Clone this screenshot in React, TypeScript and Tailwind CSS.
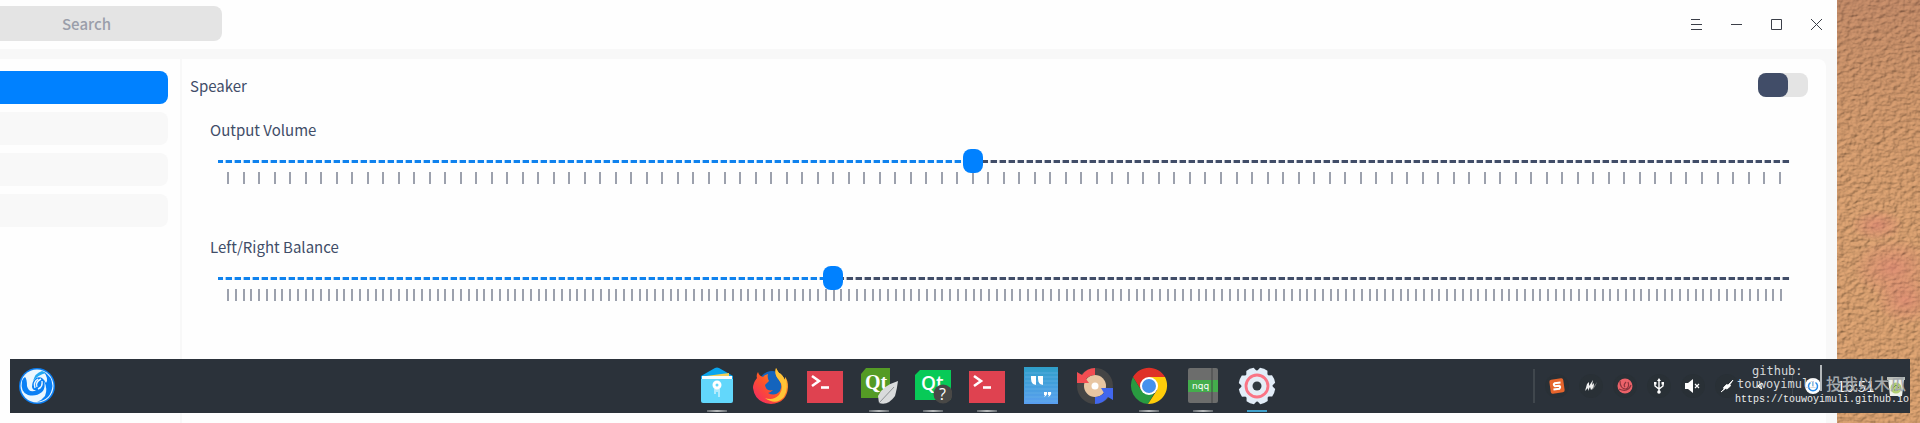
import React from "react";

function TickSlider({ id, label, value, max }: { id: string; label: string; value: number; max: number }) {
  const [current, setCurrent] = React.useState(value);
  const percent = (current / max) * 100;
  return (
    <section className="h-[117px] px-7">
      <label htmlFor={id} className="block h-6 leading-6">
        {label}
      </label>
      <div className="relative mx-2 mt-[7px] h-6 pt-[11px]">
        <div className="h-[3px] bg-[repeating-linear-gradient(90deg,#414d68_0px,#414d68_5px,#f4f5f7_5px,#f4f5f7_7px,#a9aebb_7px,#a9aebb_8px,#414d68_8px,#414d68_9px)]">
          <div
            className="h-[3px] bg-[repeating-linear-gradient(90deg,#0f82ee_0px,#0f82ee_5px,#f3f9fe_5px,#f3f9fe_7px,#9fcdf8_7px,#9fcdf8_8px,#0f82ee_8px,#0f82ee_9px)]"
            style={{ width: percent + "%" }}
          />
        </div>
        <input
          id={id}
          type="range"
          min={0}
          max={max}
          value={current}
          onChange={(e) => setCurrent(Number(e.target.value))}
          className="absolute inset-0 m-0 h-6 w-full cursor-pointer appearance-none bg-transparent [&::-webkit-slider-thumb]:h-6 [&::-webkit-slider-thumb]:w-5 [&::-webkit-slider-thumb]:appearance-none [&::-webkit-slider-thumb]:rounded-lg [&::-webkit-slider-thumb]:bg-[#0081ff]"
        />
      </div>
      <div className="-mt-px ml-[17px] mr-[19px] flex h-3">
        {Array.from({ length: max + 1 }, (_, i) => (
          <i key={i} className="h-3 w-0 grow last:grow-0">
            <i className="block h-3 w-[2px] bg-[#9ca1ad]" />
          </i>
        ))}
      </div>
    </section>
  );
}

function Launcher() {
  return (
    <svg viewBox="0 0 38 38" className="size-[38px]">
      <circle cx="19" cy="19" r="18" fill="#0b7df0" />
      <circle cx="19" cy="19" r="16.500" fill="#eaf7ff" />
      <path d="M4 14Q2 25 10 28Q18 30 24 25Q28 21 26 14Q30 22 27 29Q24 33 19 35Q33 33 34.500 19Q34 9 26 5Q31 12 28 16Q24 8 18 11Q14 14 14 20Q15 24 19 23Q11 27 9 19Q9 12 7 10Q5 11 4 14Z" fill="#0a80f5" />
      <path d="M9 7Q16 2 25 4.500Q18 6 15 14Q14 11 9 7Z" fill="#eaf7ff" />
      <path d="M15 14Q17 6 24 4Q27 5 28 6Q20 8 15 14Z" fill="#22a8f2" />
      <path d="M19 20Q17 15 23 12M20 22Q25 20 24 14M17 21Q15 15 20 12" fill="none" stroke="#eaf7ff" strokeWidth="1.400" />
    </svg>
  );
}

function Files() {
  return (
    <svg viewBox="0 0 38 38" className="size-[38px]">
      <path d="M3 9L17 1Q19 0 21 1L35 9V14H3Z" fill="#0aa5ee" />
      <path d="M8 9L31 6V14H8Z" fill="#f3cf57" />
      <path d="M4 9H34V16H4Z" fill="#f7fdff" />
      <path d="M3 12H35V34Q35 36 33 36H5Q3 36 3 34Z" fill="#62d7fb" />
      <circle cx="19" cy="18" r="3" fill="none" stroke="#fff" strokeWidth="3" />
      <path d="M17 22V27M19 22V25M21 22V30" stroke="#fff" />
    </svg>
  );
}

function Firefox() {
  return (
    <svg viewBox="0 0 38 38" className="size-[38px]">
      <defs>
        <linearGradient id="fx" x1="0" y1="1" x2="1" y2="0">
          <stop offset="0" stopColor="#f2206c" />
          <stop offset=".5" stopColor="#ff5a25" />
          <stop offset="1" stopColor="#ffd530" />
        </linearGradient>
      </defs>
      <circle cx="20" cy="17" r="13" fill="#1464bd" />
      <path d="M24 1Q22 8 27 13Q31 18 28 24Q23 30 16 26Q18 26 21 23Q14 25 13 18Q16 15 17 14Q15 11 16 7Q12 8 11 10Q7 9 6 5Q4 8 5 11Q1 16 1 21Q3 36 19 37Q35 36 36 20Q36 13 33 10V13Q30 7 27 6Q25 4 24 1Z" fill="url(#fx)" />
      <path d="M24 1Q22 8 27 13Q33 20 27 28Q21 34 13 31Q24 39 32 30Q37 21 33 10V13Q30 7 27 6Z" fill="#ffc436" />
    </svg>
  );
}

function Terminal() {
  return (
    <svg viewBox="0 0 38 38" className="size-[38px]">
      <path d="M1 4H37V36H1Z" fill="#df4250" />
      <path d="M6 9L13 14L6 19" fill="none" stroke="#fff" strokeWidth="2.600" />
      <path d="M15 20.500H23" stroke="#fff" strokeWidth="2.600" />
    </svg>
  );
}

function QtCreator() {
  return (
    <svg viewBox="0 0 38 38" className="size-[38px]">
      <path d="M1 7L6 1H30V31H1Z" fill="#549b25" />
      <text x="5" y="22" fontFamily="Liberation Serif, serif" fontWeight="700" fontSize="20" fill="#fff">Qt</text>
      <path d="M38 14Q22 19 18 29L19 36Q28 39 35 29Q37 22 38 14Z" fill="#d9dbdc" />
      <path d="M34 20L19 36" stroke="#8d9194" />
    </svg>
  );
}

function QtAssistant() {
  return (
    <svg viewBox="0 0 38 38" className="size-[38px]">
      <path d="M1 8L6 3H37V33H1Z" fill="#08ca57" />
      <text x="7" y="23" fontFamily="Open Sans, sans-serif" fontWeight="600" fontSize="19" fill="#fff">Qt</text>
      <circle cx="29" cy="27" r="9.500" fill="#494846" />
      <text x="25" y="33" fontFamily="Open Sans, sans-serif" fontSize="16" fill="#fff">?</text>
    </svg>
  );
}

function Notes() {
  return (
    <svg viewBox="0 0 38 38" className="size-[38px]">
      <defs>
        <linearGradient id="notes" x1="0" y1="0" x2="0" y2="1">
          <stop offset="0" stopColor="#2f9fc9" />
          <stop offset="1" stopColor="#5a9ff0" />
        </linearGradient>
      </defs>
      <path d="M2 0H36V37H2Z" fill="url(#notes)" />
      <path d="M3 6H36M3 10H36M3 14H36M3 18H36M3 22H36M3 26H36M3 30H36M3 34H36" stroke="#6ab6e8" strokeWidth=".6" />
      <path d="M9 9H14V18L11 17Q9 15 9 12ZM16 9H21V18L18 17Q16 15 16 12ZM22 25H25Q26 28 22 30L23 28H22ZM26 25H29Q30 28 26 30L27 28H26Z" fill="#fff" />
    </svg>
  );
}

function DiskSync() {
  return (
    <svg viewBox="0 0 38 38" className="size-[38px]">
      <circle cx="19" cy="19" r="18" fill="#454545" />
      <circle cx="19" cy="19" r="11" fill="#e8c6a2" />
      <path d="M19 1Q11 1 6 8L1 5V16H13L10 12Q14 8 19 8Z" fill="#f24d52" />
      <path d="M19 37Q27 37 32 30L37 33V21H25L28 26Q24 30 19 30Z" fill="#4167ee" />
      <circle cx="19" cy="19" r="3.500" fill="#fff" />
    </svg>
  );
}

function Chrome() {
  return (
    <svg viewBox="0 0 38 38" className="size-[38px]">
      <path d="M3 10A18.500 18.500 0 0 1 35 10H19L11 23Z" fill="#df3027" />
      <path d="M3 10A18.500 18.500 0 0 0 18 37L26 23L19 26L11 23Z" fill="#299b40" />
      <path d="M35 10H19L27 23L18 37A18.500 18.500 0 0 0 35 10Z" fill="#ffcd0a" />
      <circle cx="19" cy="19" r="9" fill="#fff" />
      <circle cx="19" cy="19" r="7" fill="#4591ed" />
    </svg>
  );
}

function Notepad() {
  return (
    <svg viewBox="0 0 38 38" className="size-[38px]">
      <rect x="4" y="1" width="30" height="35" rx="2" fill="#6c6d6c" />
      <path d="M4 13H34V25H4Z" fill="#44ad4c" />
      <path d="M28 1V36" stroke="#454746" />
      <text x="8" y="22" fontFamily="DejaVu Sans, sans-serif" fontSize="9" fill="#fff">nqq</text>
    </svg>
  );
}

function Gear() {
  return (
    <svg viewBox="0 0 38 38" className="size-[38px]">
      <g fill="#e2edf8">
        <circle cx="19" cy="19" r="15.500" />
        {[0, 45, 90, 135, 180, 225, 270, 315].map((a) => (
          <path key={a} d="M13 6L15 1Q19 0 23 1L25 6Z" transform={"rotate(" + (a + 22) + " 19 19)"} />
        ))}
      </g>
      <circle cx="19" cy="19" r="11" fill="#e5edf6" stroke="#fa7485" strokeWidth="2.800" />
      <circle cx="19" cy="19" r="4.500" fill="#303940" />
    </svg>
  );
}

const dockItems = [
  { name: "Files", icon: <Files />, mark: "gray" },
  { name: "Firefox", icon: <Firefox />, mark: "" },
  { name: "Terminal", icon: <Terminal />, mark: "" },
  { name: "Qt Creator", icon: <QtCreator />, mark: "gray" },
  { name: "Qt Assistant", icon: <QtAssistant />, mark: "gray" },
  { name: "Terminal window", icon: <Terminal />, mark: "gray" },
  { name: "Notes", icon: <Notes />, mark: "" },
  { name: "Disk sync", icon: <DiskSync />, mark: "" },
  { name: "Chrome", icon: <Chrome />, mark: "gray" },
  { name: "Notepad", icon: <Notepad />, mark: "gray" },
  { name: "Settings", icon: <Gear />, mark: "blue" },
];

const trayItems = [
  {
    name: "Input method",
    icon: (
      <g transform="rotate(-8 8 8)">
        <rect x="1" y="1" width="14" height="14" rx="2" fill="#e6642c" />
        <path d="M12 5H6Q4 6 6 8H10Q12 9 10 11H4" fill="none" stroke="#fff" strokeWidth="2" />
      </g>
    ),
  },
  {
    name: "Monitor",
    icon: (
      <g>
        <path d="M9 12Q12 10 14 4L11 8L10 6Z" fill="#777b7e" />
        <path d="M2 13L4 6L6 4V8L10 2L9 7L11 5Q11 10 8 12L7 9L5 13V10Z" fill="#f0f0f0" />
      </g>
    ),
  },
  {
    name: "Deepin",
    icon: (
      <g>
        <circle cx="8" cy="8" r="7.500" fill="#ec6269" />
        <path d="M3 3Q3 11 9 11Q13 9 11 4M2 11Q11 15 14 7M8 9Q6 7 9 4" fill="none" stroke="#8c343d" strokeWidth="1.200" />
      </g>
    ),
  },
  {
    name: "USB",
    icon: (
      <g>
        <path d="M8 14V2M4 5V8L8 11L12 8V5" fill="none" stroke="#fff" strokeWidth="1.400" />
        <path d="M6 3L8 0L10 3ZM3 4H5.500V6.500H3ZM10.500 4H13V6.500H10.500Z" fill="#fff" />
        <circle cx="8" cy="14" r="1.800" fill="#fff" />
      </g>
    ),
  },
  {
    name: "Muted",
    icon: (
      <g>
        <path d="M0 5H3L8 1V15L3 11H0Z" fill="#fff" />
        <path d="M10 6L14 10M14 6L10 10" stroke="#fff" strokeWidth="1.200" />
      </g>
    ),
  },
  {
    name: "Network",
    icon: <path d="M2 14L5 11L4.500 9.500L7.500 6.500L9 7L14 2L11 6.500L11.500 8L8 11L6.500 10.500Z" fill="#fff" stroke="#fff" strokeWidth=".8" />,
  },
];

function Dock() {
  return (
    <footer className="absolute inset-x-2.5 bottom-2.5 flex h-[54px] items-center bg-[#2b323a]">
      <button aria-label="Launcher" className="ml-2">
        <Launcher />
      </button>
      <nav className="ml-auto mr-[257px] flex gap-4 self-stretch">
        {dockItems.map((item) => (
          <button key={item.name} aria-label={item.name} className="flex w-[38px] flex-col items-center justify-between pt-2">
            {item.icon}
            <span
              className={
                item.mark === "blue"
                  ? "mb-px h-0.5 w-5 bg-[#3f9fc9]"
                  : item.mark === "gray"
                    ? "mb-px h-0.5 w-5 bg-[linear-gradient(90deg,#656b70,#b9bcbd,#656b70)]"
                    : "mb-px h-0.5 w-5"
              }
            />
          </button>
        ))}
      </nav>
      <div className="flex w-[377px] items-center">
        <span className="h-[34px] w-0.5 bg-[#40474d]" />
        <div className="ml-2.5 flex gap-2.5">
          {trayItems.map((item) => (
            <button key={item.name} aria-label={item.name} className="flex size-6 items-center justify-center rounded-full bg-[#293036]">
              <svg viewBox="0 0 16 16" className="size-4">
                {item.icon}
              </svg>
            </button>
          ))}
        </div>
        <button aria-label="Collapse tray" className="ml-[9px] flex size-6 items-center justify-center">
          <svg viewBox="0 0 8 8" className="size-2">
            <path d="M6 1L2 4L6 7" fill="none" stroke="#fff" strokeWidth="1.400" />
          </svg>
        </button>
        <span className="ml-5 h-[34px] w-px bg-[#40474d]" />
        <button aria-label="Power" className="ml-3">
          <svg viewBox="0 0 16 16" className="size-4">
            <circle cx="8" cy="8" r="8" fill="#fff" />
            <path d="M5.500 4.500A4.500 4.500 0 1 0 10.500 4.500M8 3V8" fill="none" stroke="#2a8be8" strokeWidth="1.500" />
          </svg>
        </button>
        <time className="ml-4 w-9 text-[15px] leading-5 text-white">16:51</time>
        <button aria-label="Trash" className="ml-[14px]">
          <svg viewBox="0 0 18 20" className="h-5 w-[18px]">
            <path d="M1 3H17L15 20H3Z" fill="#eef1ea" />
            <path d="M0 1H18V4H0Z" fill="#b9bdb8" />
            <circle cx="9" cy="12" r="5.500" fill="#b3cf74" />
            <path d="M6 12L9 9L12 12M7 14H11" fill="none" stroke="#6f9440" />
          </svg>
        </button>
      </div>
      <div className="pointer-events-none absolute right-0 top-1.5 w-[175px] font-['DejaVu_Sans_Mono',monospace] text-[#d5d8da]">
        <div className="flex">
          <p className="w-[87px] border-r-2 border-[#b4b8bb] pl-0.5 text-xs leading-[13px]">
            <span className="pl-[15px]">github:</span>
            <br />
            touwoyimuli
          </p>
          <p className="self-end whitespace-nowrap pl-1 font-['Noto_Sans_CJK_SC',sans-serif] text-base font-medium leading-4 text-[#a4a8ab]">投我以木瓜</p>
        </div>
        <p className="mt-0.5 whitespace-nowrap font-['Liberation_Mono',monospace] text-[10px] leading-[14px] text-[#eceded]">https://touwoyimuli.github.io</p>
      </div>
    </footer>
  );
}

const windowButtons = [
  { name: "Menu", d: "M0 .5H9M0 5.500H11M0 10.500H11" },
  { name: "Minimize", d: "M0 5.500H11" },
  { name: "Maximize", d: "M.5 .5H10.500V10.500H.5Z" },
  { name: "Close", d: "M0 0L11 11M11 0L0 11" },
];

function Wallpaper() {
  return (
    <svg className="h-auto w-[83px] shrink-0 self-stretch bg-[#c8976a]" preserveAspectRatio="none" aria-hidden="true">
      <defs>
        <filter id="leather" x="0" y="0" width="100%" height="100%">
          <feTurbulence type="fractalNoise" baseFrequency="0.17 0.25" numOctaves="3" seed="7" result="n" />
          <feDiffuseLighting in="n" surfaceScale="1.9" diffuseConstant="1.08" lightingColor="#dfa578">
            <feDistantLight azimuth="225" elevation="52" />
          </feDiffuseLighting>
        </filter>
        <radialGradient id="blush">
          <stop offset="0" stopColor="#e07d75" stopOpacity=".5" />
          <stop offset="1" stopColor="#e07d75" stopOpacity="0" />
        </radialGradient>
        <linearGradient id="shade" x1="0" y1="0" x2="0" y2="1">
          <stop offset="0" stopColor="#9a6250" stopOpacity=".35" />
          <stop offset=".5" stopColor="#d09a58" stopOpacity=".15" />
          <stop offset="1" stopColor="#d9a15c" stopOpacity=".2" />
        </linearGradient>
      </defs>
      <rect width="100%" height="100%" filter="url(#leather)" />
      <rect width="100%" height="100%" fill="url(#shade)" />
      <ellipse cx="40" cy="225" rx="26" ry="16" fill="url(#blush)" />
      <ellipse cx="56" cy="268" rx="40" ry="30" fill="url(#blush)" />
      <ellipse cx="68" cy="300" rx="30" ry="24" fill="url(#blush)" />
    </svg>
  );
}

export default function App() {
  return (
    <div className="relative flex min-h-screen font-['Noto_Sans_CJK_SC',sans-serif] text-[15px] text-[#414d68]">
      <div className="flex min-w-0 grow flex-col bg-[#f8f8f8]">
        <header className="mb-2.5 flex h-[49px] items-center justify-between bg-[#fefefe]">
          <input
            type="search"
            aria-label="Search"
            placeholder="Search"
            className="mb-0.5 h-[35px] w-[222px] rounded-r-lg bg-[#e4e4e4] pl-[62px] font-medium placeholder:text-[#9a9eaa]"
          />
          <div className="flex">
            {windowButtons.map((b) => (
              <button key={b.name} aria-label={b.name} className="flex h-[49px] w-10 items-center justify-center">
                <svg viewBox="0 0 12 11" className="h-[11px] w-3">
                  <path d={b.d} fill="none" stroke="#3b3f48" />
                </svg>
              </button>
            ))}
          </div>
        </header>
        <div className="flex grow">
          <nav className="mr-0.5 w-[180px] bg-[#fefefe] pr-3 pt-3">
            <ul className="flex flex-col gap-2">
              <li className="h-[33px] rounded-r-lg bg-[#0081ff]" />
              <li className="h-[33px] rounded-r-lg bg-[#f8f8f8]" />
              <li className="h-[33px] rounded-r-lg bg-[#f8f8f8]" />
              <li className="h-[33px] rounded-r-lg bg-[#f8f8f8]" />
            </ul>
          </nav>
          <main className="mr-[11px] min-w-0 grow rounded-tr-lg bg-[#fefefe] pt-[14px]">
            <div className="mb-[21px] flex h-6 items-center justify-between pl-2 pr-[18px]">
              <label htmlFor="speaker" className="pt-0.5">
                Speaker
              </label>
              <input
                id="speaker"
                type="checkbox"
                role="switch"
                className="h-6 w-[50px] appearance-none rounded-lg bg-[#e4e4e4] before:block before:h-6 before:w-[30px] before:rounded-lg before:bg-[#414d68] checked:before:ml-5 checked:before:bg-[#0081ff]"
              />
            </div>
            <TickSlider id="volume" label="Output Volume" value={48} max={100} />
            <TickSlider id="balance" label="Left/Right Balance" value={78} max={200} />
          </main>
        </div>
      </div>
      <Wallpaper />
      <Dock />
    </div>
  );
}
